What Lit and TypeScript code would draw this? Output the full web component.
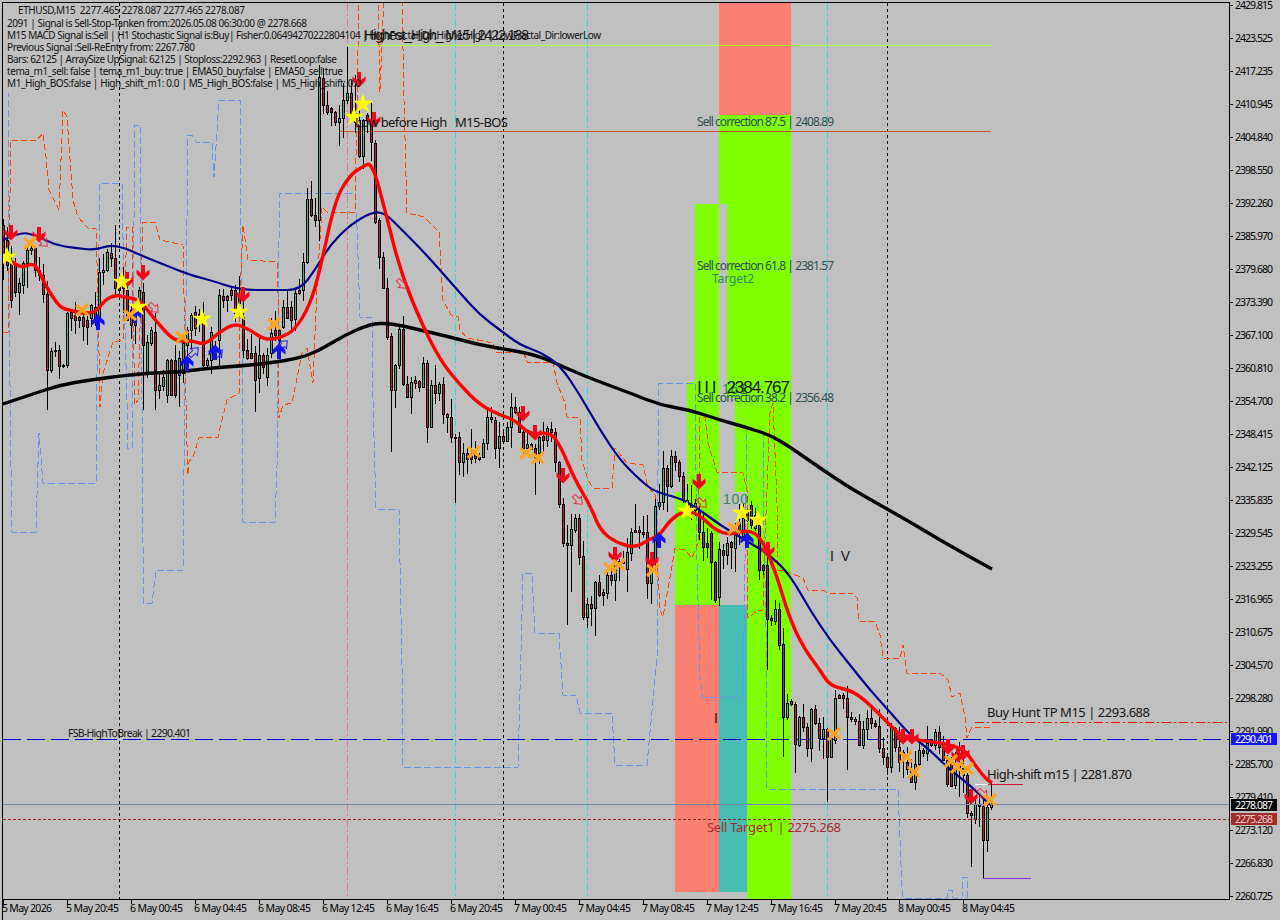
import { LitElement, html, svg, css } from "lit";
import { customElement } from "lit/decorators.js";

type P = number[][];
const C: P = [
[3,225,260,0],[7,240,265,0],[11,262,300,0],[15,263,292,0],[19,283,292,1],[23,263,285,1],[27,250,263,1],[31,248,250,1],[35,248,270,0],[39,270,275,0],[43,275,294,0],[47,294,370,0],[51,351,370,1],[55,350,351,0],[59,350,366,0],[63,365,366,0],[67,313,365,1],[71,312,318,0],[75,315,320,0],[79,317,320,0],[83,317,326,0],[87,320,327,0],[91,305,318,1],[95,307,318,0],[99,272,318,1],[103,270,272,1],[107,252,270,1],[111,253,258,0],[115,258,288,0],[119,285,290,0],[123,283,288,0],[127,290,320,0],[131,310,325,0],[135,317,325,0],[139,290,300,1],[143,292,345,0],[147,342,373,1],[151,330,343,1],[155,332,390,0],[159,385,390,1],[163,377,386,1],[167,360,395,1],[171,360,395,0],[175,360,395,0],[179,358,375,1],[183,343,373,1],[187,330,345,1],[191,315,330,1],[195,312,328,0],[199,314,320,0],[203,315,365,0],[207,360,365,1],[211,332,360,1],[215,347,352,0],[219,295,340,1],[223,296,300,0],[227,296,300,0],[231,290,295,0],[235,290,313,0],[239,295,303,0],[243,317,350,0],[247,350,358,0],[251,353,358,0],[255,353,380,0],[259,355,378,1],[263,355,367,0],[267,355,377,1],[271,333,353,1],[275,330,335,0],[279,330,340,0],[283,307,327,1],[287,307,318,0],[291,307,320,0],[295,293,319,1],[299,290,293,0],[303,262,290,1],[307,199,262,1],[311,199,215,0],[315,215,220,0],[319,77,220,1],[323,78,105,0],[327,105,112,0],[331,108,112,0],[335,112,122,0],[339,118,122,1],[343,100,118,1],[347,93,100,1],[351,93,113,0],[355,113,122,0],[359,120,156,0],[363,120,156,1],[367,115,120,0],[371,120,142,0],[375,143,222,0],[379,220,257,0],[383,257,288,0],[387,288,337,0],
[391,336,390,0],[395,365,390,1],[399,329,365,1],[403,329,384,0],[407,384,397,0],[411,382,397,1],[415,380,383,0],[419,381,387,0],[423,363,387,1],[427,363,427,0],[431,385,427,1],[435,385,393,0],[439,384,393,1],[443,384,414,0],[447,414,417,0],[451,417,437,0],[455,437,438,0],[459,437,462,0],[463,453,462,1],[467,453,459,0],[471,453,459,0],[475,453,458,0],[479,457,459,0],[483,443,457,1],[487,417,443,1],[491,417,419,0],[495,420,448,0],[499,436,448,1],[503,436,441,0],[507,427,441,1],[511,407,427,1],[515,407,412,0],[519,412,432,0],[523,432,448,0],[527,444,448,1],[531,444,449,0],[535,448,457,0],[539,437,453,1],[543,436,440,0],[547,428,440,1],[551,429,432,0],[555,432,462,0],[559,462,504,0],[563,504,543,0],[567,543,545,0],[571,529,545,1],[575,518,530,1],[579,518,557,0],[583,556,617,0],[587,604,617,1],[591,604,608,0],[595,582,608,1],[599,582,595,0],[603,592,595,0],[607,575,593,1],[611,575,580,0],[615,562,580,1],[619,561,563,0],[623,561,563,0],[627,552,569,1],[631,532,553,1],[635,530,532,0],[639,530,532,0],[643,532,534,0],[647,532,583,0],[651,560,583,1],[655,506,560,1],[659,502,506,1],[663,468,502,1],[667,468,486,0],[671,456,486,1],[675,456,462,0],[679,462,476,0],[683,476,500,0],[687,500,512,0],[691,505,511,0],[695,503,510,1],[699,510,532,0],[703,532,547,0],[707,543,547,0],[711,533,562,0],[715,562,600,0],[719,549,597,1],[723,550,555,0],[727,543,555,1],[731,542,547,0],[735,533,548,1],[739,522,530,0],[743,518,540,1],[747,510,520,0],[751,505,525,0],[755,515,528,1],[759,525,570,0],[763,565,570,0],
[767,565,619,0],[771,618,620,0],[775,609,621,1],[779,609,645,0],[783,644,717,0],[787,703,717,1],[791,701,704,0],[795,704,744,0],[799,717,745,1],[803,717,727,0],[807,727,748,0],[811,709,748,1],[815,709,723,0],[819,723,738,0],[823,729,738,1],[827,729,757,0],[831,738,757,1],[835,698,740,1],[839,695,698,0],[843,695,698,0],[847,698,717,0],[851,717,719,0],[855,719,721,0],[859,721,745,0],[863,729,745,1],[867,718,729,1],[871,718,723,0],[875,723,726,0],[879,726,748,0],[883,748,757,0],[887,757,767,0],[891,727,767,1],[895,728,747,0],[899,747,762,0],[903,752,755,0],[907,762,769,0],[911,769,782,0],[915,764,782,1],[919,750,764,1],[923,750,753,0],[927,743,753,1],[931,740,745,0],[935,732,745,1],[939,732,747,0],[943,747,760,0],[947,760,784,0],[951,763,786,0],[955,768,785,1],[959,763,768,0],[963,768,775,0],[967,775,813,0],[971,813,815,0],[975,804,819,1],[979,804,806,0],[983,806,840,0],[987,807,840,1],[991,804,807,1],
];
const WICK: Record<number, number[]> = {347:[47,0],351:[80,0],319:[65,0],355:[75,0],307:[188,0],391:[0,452],395:[0,408],455:[0,503],567:[0,625],535:[0,495],587:[0,628],583:[0,620],571:[0,592],783:[0,757],795:[0,773],827:[0,802],971:[0,867],983:[0,878],47:[0,410],143:[0,410],155:[0,410],255:[0,412],115:[225,0],39:[0,0],715:[0,603],711:[0,600],179:[0,407],175:[0,398],767:[0,670],835:[690,0],847:[0,770],939:[726,0]};

const RED: P = [[3,255],[12,262],[22,268],[35,262],[45,285],[60,308],[70,310],[80,313],[95,313],[105,300],[115,295],[125,297],[140,300],[155,320],[175,342],[190,340],[205,345],[218,333],[235,323],[250,330],[265,340],[280,338],[295,330],[310,305],[320,270],[335,200],[350,175],[362,167],[372,162],[385,210],[400,270],[420,320],[440,360],[460,385],[480,405],[500,415],[515,420],[530,435],[550,432],[560,445],[575,480],[590,505],[600,530],[615,542],[635,548],[648,540],[660,535],[670,520],[685,510],[700,515],[715,530],[730,535],[745,530],[760,535],[775,570],[790,620],[805,650],[820,670],[830,686],[850,690],[865,700],[885,720],[900,735],[915,740],[935,742],[950,745],[965,750],[975,765],[985,778],[992,783]];
const NAVY: P = [[3,240],[20,232],[35,235],[55,245],[75,248],[95,250],[110,245],[125,248],[140,255],[165,265],[190,275],[210,280],[240,290],[275,290],[300,290],[315,270],[330,245],[350,225],[372,212],[385,213],[400,228],[420,248],[440,270],[460,293],[480,315],[500,330],[520,345],[540,352],[560,365],[580,395],[600,430],[620,460],[640,480],[655,492],[680,498],[700,510],[720,525],[745,540],[770,555],[790,575],[810,610],[830,640],[850,665],[870,690],[890,712],[910,735],[930,750],[950,770],[970,785],[990,805]];
const BLACK: P = [[3,404],[30,395],[60,385],[90,380],[120,376],[150,373],[180,372],[210,368],[240,366],[270,363],[300,358],[320,350],[345,335],[370,324],[390,323],[420,330],[450,337],[480,345],[510,350],[540,356],[570,370],[600,382],[630,393],[660,405],[690,410],[720,420],[745,427],[770,435],[790,447],[820,468],[850,488],[880,505],[910,522],[940,540],[970,557],[992,569]];
const ORANGE: P = [[3,332],[8,332],[8,300],[11,140],[37,140],[43,133],[46,157],[49,190],[59,210],[63,110],[67,117],[73,200],[78,217],[88,228],[96,228],[98,297],[100,407],[103,373],[113,342],[123,340],[127,227],[132,227],[133,320],[135,405],[138,400],[143,222],[155,222],[160,240],[183,245],[186,400],[187,445],[188,475],[188,463],[193,457],[199,438],[218,437],[222,420],[227,400],[239,393],[239,320],[243,225],[248,260],[277,262],[278,293],[279,418],[283,405],[292,403],[302,353],[307,348],[313,383],[317,287],[322,207],[327,212],[355,212],[359,-5],[378,-5],[380,92],[384,-5],[402,-5],[404,100],[407,213],[424,217],[439,232],[443,300],[451,315],[458,317],[460,330],[467,338],[493,343],[495,352],[523,352],[528,363],[553,362],[557,383],[565,403],[567,417],[580,418],[582,460],[588,480],[593,488],[612,488],[615,448],[627,463],[643,465],[648,487],[655,495],[657,560],[660,610],[663,617],[673,560],[675,548],[685,550],[692,558],[698,543],[700,417],[705,417],[708,443],[717,472],[743,473],[747,490],[747,600],[748,618],[758,610],[763,610],[765,540],[770,413],[773,403],[777,503],[778,570],[787,572],[803,578],[808,590],[825,591],[827,593],[852,593],[857,598],[859,621],[875,621],[880,635],[883,658],[900,659],[903,645],[907,673],[940,673],[948,680],[952,697],[960,693],[965,717],[967,738],[972,727],[990,727]];
const BLUE: P = [[8,90],[9,300],[11,467],[12,532],[36,532],[37,495],[39,433],[43,483],[96,483],[96,445],[98,300],[100,183],[122,183],[124,293],[127,400],[127,448],[132,448],[132,407],[135,125],[140,125],[142,400],[143,543],[143,603],[152,603],[156,570],[183,570],[184,467],[186,300],[188,135],[192,135],[196,142],[212,142],[214,177],[219,100],[240,100],[240,167],[242,300],[243,522],[275,522],[277,467],[279,240],[280,193],[355,193],[357,227],[360,317],[372,317],[373,400],[376,509],[399,509],[402,667],[403,767],[518,767],[523,573],[532,573],[535,633],[559,633],[563,695],[576,695],[580,713],[612,713],[615,765],[647,765],[657,657],[657,560],[659,383],[695,383],[697,560],[700,677],[703,697],[743,697],[745,560],[747,427],[764,433],[763,470],[764,533],[766,627],[767,789],[898,789],[902,890],[903,898],[947,898],[948,890],[952,890],[953,898],[962,898],[963,877],[967,877],[968,898]];

const DOWN: P = [[11,233],[39,235],[127,280],[143,273],[243,295],[359,80],[374,120],[523,414],[535,433],[563,476],[615,555],[652,560],[699,482],[768,550],[903,737],[912,737],[948,747],[958,755],[963,753],[971,797]];
const UP: P = [[98,322],[135,315],[187,363],[215,352],[279,351],[659,540],[747,540]];
const STAR: P = [[7,257],[122,282],[138,307],[202,319],[239,312],[363,104],[354,117],[687,511],[742,513],[758,520]];
const CROSS: P = [[30,243],[82,310],[130,315],[182,337],[274,324],[474,452],[526,453],[538,458],[610,568],[619,565],[653,570],[734,528],[834,734],[906,757],[914,772],[951,761],[957,767],[967,769],[990,800]];
const HOLLOW_DOWN: P = [[43,242],[154,308],[402,284],[578,500],[702,503],[983,794]];
const HOLLOW_UP: P = [[194,352],[218,354],[283,345]];

const HEADER: [string, number, number, number][] = [
  ["ETHUSD,M15  2277.465 2278.087 2277.465 2278.087", 18, 227, 14],
  ["2091 | Signal is Sell-Stop-Tanken from:2026.05.08 06:30:00 @ 2278.668", 7, 300, 27],
  ["M15 MACD Signal is:Sell | H1 Stochastic Signal is:Buy| Fisher:0.06494270222804104 | HighFractal_Dir:HigherHigh | LowFractal_Dir:lowerLow", 7, 594, 39],
  ["Previous Signal :Sell-ReEntry from: 2267.780", 7, 188, 51],
  ["Bars: 62125 | ArraySize UpSignal: 62125 | Stoploss:2292.963 | ResetLoop:false", 7, 330, 63],
  ["tema_m1_sell: false | tema_m1_buy: true | EMA50_buy:false | EMA50_sell:true", 7, 336, 75],
  ["M1_High_BOS:false | High_shift_m1: 0.0 | M5_High_BOS:false | M5_High_shift: 0.0", 7, 354, 87],
];
const LABELS: [string, number, number, number, string][] = [
  ["Highest_High_ M15 | 2422.188", 364, 165, 40, "lg ink"],
  ["Low before High   M15-BOS", 355, 153, 127, "big ink"],
  ["Sell correction 87.5 | 2408.89", 697, 137, 126, "mid slate"],
  ["Sell correction 61.8 | 2381.57", 697, 137, 270, "mid slate"],
  ["Target2", 712, 42, 283, "mid sea"],
  ["161", 722, 25, 394, "lg sea"],
  ["I I I   2384.767", 697, 93, 393, "xl ink"],
  ["Sell correction 38.2 | 2356.48", 697, 137, 402, "mid slate"],
  ["100", 723, 25, 504, "lg sea"],
  ["I V", 830, 20, 561, "lg ink"],
  ["I", 714, 3, 723, "lg ink"],
  ["FSB-HighToBreak | 2290.401", 68, 123, 737, "sm ink"],
  ["Sell Target1 | 2275.268", 707, 134, 832, "big brown"],
  ["Buy Hunt TP M15 | 2293.688", 987, 163, 717, "big ink"],
  ["High-shift m15 | 2281.870", 987, 145, 779, "big ink"],
];
const PRICES = ["2429.815","2423.525","2417.235","2410.945","2404.840","2398.550","2392.260","2385.970","2379.680","2373.390","2367.100","2360.810","2354.700","2348.415","2342.125","2335.835","2329.545","2323.255","2316.965","2310.675","2304.570","2298.280","2291.990","2285.700","2279.410","2273.120","2266.830","2260.725"];
const TIMES = ["5 May 2026","5 May 20:45","6 May 00:45","6 May 04:45","6 May 08:45","6 May 12:45","6 May 16:45","6 May 20:45","7 May 00:45","7 May 04:45","7 May 08:45","7 May 12:45","7 May 16:45","7 May 20:45","8 May 00:45","8 May 04:45"];
const ZONES: number[][] = [[719,3,72,112,0],[719,115,72,89,1],[695,204,24,178,1],[727,204,64,194,1],[687,382,32,223,1],[735,398,56,94,1],[675,492,12,113,1],[747,492,44,407,1],[675,605,44,287,0],[719,605,28,287,2]];
const ZONE_CLS = ["salmon", "lime", "teal"];

const path = (p: P) => p.map((q, i) => (i ? "L" : "M") + q[0] + " " + q[1]).join("");
const smooth = (p: P) => {
  let d = `M${p[0][0]} ${p[0][1]}`;
  for (let i = 1; i < p.length - 1; i++) {
    const mx = (p[i][0] + p[i + 1][0]) / 2;
    const my = (p[i][1] + p[i + 1][1]) / 2;
    d += `Q${p[i][0]} ${p[i][1]} ${mx} ${my}`;
  }
  const l = p[p.length - 1];
  return d + `L${l[0]} ${l[1]}`;
};
const DOWN_SHAPE = "M-2 -8H2V0L6.5 -3.5V1L0 7.5L-6.5 1V-3.5L-2 0Z";
const UP_SHAPE = "M-2 8H2V0L6.5 3.5V-1L0 -7.5L-6.5 -1V3.5L-2 0Z";
const HOLLOW = "M-2 -6H2V0H5L0 6L-5 0H-2Z";
const STAR_PTS = Array.from({ length: 10 }, (_, i) => {
  const r = i % 2 ? 4 : 10.5;
  const a = (Math.PI / 5) * i - Math.PI / 2;
  return (r * Math.cos(a)).toFixed(1) + "," + (r * Math.sin(a)).toFixed(1);
}).join(" ");

let seed = 12345;
const rnd = () => ((seed = (seed * 1103515245 + 12345) & 0x7fffffff) / 0x7fffffff);

const candles = C.map(([x, top, bot, up]) => {
  const o = WICK[x] || [0, 0];
  const hi = o[0] || Math.round(top - 1 - rnd() * rnd() * 26);
  const lo = o[1] || Math.round(bot + 1 + rnd() * rnd() * 30);
  return { x, top, bot, up, hi, lo };
});

@customElement("app-root")
export class AppRoot extends LitElement {
  static styles = css`
    :host { display: block; width: 1280px; height: 920px; background: #c0c0c0; overflow: hidden; }
    .chart { display: block; width: 1280px; height: 920px; }
    text { font-family: "Noto Sans", "DejaVu Sans", sans-serif; fill: #000; }
    .hd { font-size: 10px; fill: #111; }
    .axis { font-size: 10.5px; fill: #000; }
    .sm { font-size: 10.5px; }
    .mid { font-size: 12px; }
    .big { font-size: 13px; }
    .lg { font-size: 14px; font-family: "Liberation Sans", sans-serif; }
    .xl { font-size: 17px; font-family: "Liberation Sans", sans-serif; }
    .ink { fill: #141414; }
    .slate { fill: #2f4f4f; }
    .sea { fill: #2e8b57; }
    .brown { fill: #a52a2a; }
    .tagw { fill: #fff; font-size: 10.5px; }
    .tagp { fill: #e8d0d0; font-size: 10.5px; }
    .salmon { fill: #fa8072; }
    .lime { fill: #7fff00; }
    .teal { fill: #45bdb2; }
    .crisp { shape-rendering: crispEdges; }
    .ln { fill: none; stroke-linejoin: round; }
    .ma-red { stroke: #f00; stroke-width: 3.4; }
    .ma-navy { stroke: #00008b; stroke-width: 2.2; }
    .ma-black { stroke: #000; stroke-width: 3.4; }
    .d-orange { stroke: #ff4500; stroke-width: 1; stroke-dasharray: 6 3; shape-rendering: crispEdges; }
    .d-blue { stroke: #6495ed; stroke-width: 1; stroke-dasharray: 7 3; shape-rendering: crispEdges; }
    .v-black { stroke: #000; stroke-dasharray: 3 3; }
    .v-cyan { stroke: #22dde6; stroke-dasharray: 8 3 2 3; }
    .v-pink { stroke: #e8709f; stroke-dasharray: 8 3 2 3; }
    .h-fib { stroke: #adff2f; }
    .h-low { stroke: #c8502a; }
    .h-fsb { stroke: #0000cd; stroke-dasharray: 18 6; }
    .h-now { stroke: #6f88a0; }
    .h-target { stroke: #962323; stroke-dasharray: 3 2; }
    .h-tp { stroke: #f00; stroke-dasharray: 9 3 2 3; }
    .h-shift { stroke: #dc143c; }
    .h-white { stroke: #fff; }
    .h-purple { stroke: #8a2be2; }
    .frame { stroke: #000; fill: none; }
    .tick { stroke: #000; }
    .wick { fill: #000; }
    .body { fill: #000; }
    .c-up { fill: #2fc07f; }
    .c-dn { fill: #c8173f; }
    .m-down { fill: #f0081a; }
    .m-up { fill: #1212ee; }
    .m-star { fill: #ffff00; }
    .m-x { stroke: #ffa51a; stroke-width: 3.2; fill: none; }
    .m-hd { fill: none; stroke: #e8304a; stroke-width: 1; }
    .m-hu { fill: none; stroke: #2222ee; stroke-width: 1; }
    .bg-blue { fill: #1414ff; }
    .bg-black { fill: #000; }
    .bg-brown { fill: #a52a2a; }
  `;

  private hline(x1: number, x2: number, y: number, cls: string) {
    return svg`<line class="crisp ${cls}" x1=${x1} x2=${x2} y1=${y} y2=${y}></line>`;
  }
  private vline(x: number, cls: string) {
    return svg`<line class="crisp ${cls}" x1=${x} x2=${x} y1="3" y2="899"></line>`;
  }
  private tag(y: number, text: string, bg: string, tx: string) {
    return svg`<rect class="crisp ${bg}" x="1231" y=${y} width="46" height="12"></rect>
      <text class=${tx} x="1235" y=${y + 10} textLength="38">${text}</text>`;
  }

  render() {
    return html`<svg class="chart" viewBox="0 0 1280 920" xmlns="http://www.w3.org/2000/svg">
      <defs><clipPath id="plot"><rect x="3" y="3" width="1226" height="896"></rect></clipPath></defs>
      <g clip-path="url(#plot)">
        ${ZONES.map((z) => svg`<rect class="crisp ${ZONE_CLS[z[4]]}" x=${z[0]} y=${z[1]} width=${z[2]} height=${z[3]}></rect>`)}
        ${[119.5, 503.5, 887.5].map((x) => this.vline(x, "v-black"))}
        ${[455.5, 587.5, 827.5].map((x) => this.vline(x, "v-cyan"))}
        ${this.vline(347.5, "v-pink")}
        <path class="ln d-blue" d=${path(BLUE)}></path>
        <path class="ln d-orange" d=${path(ORANGE)}></path>
        ${this.hline(347, 993, 45.5, "h-fib")}
        ${this.hline(340, 991, 131.5, "h-low")}
        ${this.hline(3, 1229, 739.5, "h-fsb")}
        ${this.hline(975, 1229, 722.5, "h-tp")}
        ${this.hline(975, 988, 784.5, "h-white")}
        ${this.hline(988, 1023, 784.5, "h-shift")}
        ${this.hline(983, 1031, 878.5, "h-purple")}
        <g class="crisp">
          ${candles.map((c) => svg`
            <rect class="wick" x=${c.x} y=${c.hi} width="1" height=${c.lo - c.hi}></rect>
            <rect class="body" x=${c.x - 1} y=${c.top} width="3" height=${Math.max(2, c.bot - c.top + 1)}></rect>
            ${c.bot - c.top > 1 ? svg`<rect class=${c.up ? "c-up" : "c-dn"} x=${c.x} y=${c.top + 1} width="1" height=${c.bot - c.top - 1}></rect>` : ""}
          `)}
        </g>
        ${this.hline(3, 1229, 804.5, "h-now")}
        ${this.hline(3, 1229, 819.5, "h-target")}
        <path class="ln ma-black" d=${smooth(BLACK)}></path>
        <path class="ln ma-navy" d=${smooth(NAVY)}></path>
        <path class="ln ma-red" d=${smooth(RED)}></path>
        ${HOLLOW_DOWN.map((m) => svg`<path class="m-hd" transform="translate(${m[0]} ${m[1]}) rotate(-45)" d=${HOLLOW}></path>`)}
        ${HOLLOW_UP.map((m) => svg`<path class="m-hu" transform="translate(${m[0]} ${m[1]}) rotate(-135)" d=${HOLLOW}></path>`)}
        ${DOWN.map((m) => svg`<path class="m-down" transform="translate(${m[0]} ${m[1]})" d=${DOWN_SHAPE}></path>`)}
        ${UP.map((m) => svg`<path class="m-up" transform="translate(${m[0]} ${m[1]})" d=${UP_SHAPE}></path>`)}
        ${STAR.map((m) => svg`<polygon class="m-star" transform="translate(${m[0]} ${m[1]})" points=${STAR_PTS}></polygon>`)}
        ${CROSS.map((m) => svg`<path class="m-x" transform="translate(${m[0]} ${m[1]})" d="M-6 -5L6 5M6 -6L-6 6"></path>`)}
      </g>
      ${LABELS.map((l) => svg`<text class=${l[4]} x=${l[1]} y=${l[3]} textLength=${l[2]} xml:space="preserve">${l[0]}</text>`)}
      ${HEADER.map((l) => svg`<text class="hd" x=${l[1]} y=${l[3]} textLength=${l[2]} xml:space="preserve">${l[0]}</text>`)}
      <path class="frame crisp" d="M2.5 920V2.5H1229.5V899.5H2.5"></path>
      ${PRICES.map((p, i) => {
        const y = 5 + i * 33;
        return svg`<line class="tick crisp" x1="1229" x2="1233" y1=${y + 0.5} y2=${y + 0.5}></line>
          <text class="axis" x="1235" y=${y + 4} textLength="38">${p}</text>`;
      })}
      ${TIMES.map((t, i) => {
        const x = 3 + i * 64;
        return svg`<line class="tick crisp" x1=${x + 0.5} x2=${x + 0.5} y1="899" y2="904"></line>
          <text class="axis" x=${x - 1} y="912" textLength=${i ? 53 : 50}>${t}</text>`;
      })}
      ${this.tag(733, "2290.401", "bg-blue", "tagw")}
      ${this.tag(799, "2278.087", "bg-black", "tagw")}
      ${this.tag(813, "2275.268", "bg-brown", "tagp")}
    </svg>`;
  }
}
